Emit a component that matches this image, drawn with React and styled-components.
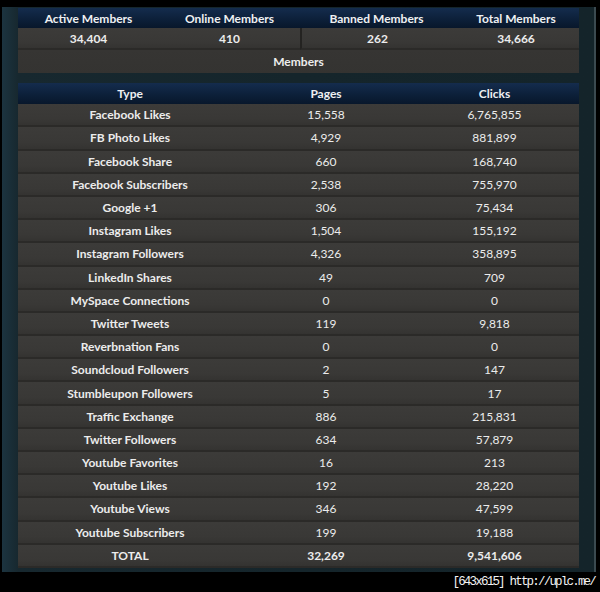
import styled, { createGlobalStyle } from "styled-components";

const Global = createGlobalStyle`
    html, body {
        margin: 0;
        padding: 0;
        background: #000;
    }
    body {
        font-family: Lato, "Open Sans", sans-serif;
    }
`;

const Page = styled.div`
    width: 600px;
    height: 592px;
    background: #000;
    display: flex;
    flex-direction: column;
    padding-top: 7px;
    box-sizing: border-box;
`;

const Panel = styled.div`
    height: 565px;
    margin-left: 2px;
    margin-right: 4px;
    box-sizing: border-box;
    padding: 1px 15px 0 16px;
    background: linear-gradient(to right, #1c3440 0px, #17282f 16px, #15252b 50%, #14242a 100%);
    border-right: 2px solid #3b4a50;
    display: flex;
    flex-direction: column;
    gap: 10px;
`;

const Footer = styled.div`
    display: flex;
    justify-content: flex-end;
    padding: 3px 5px 0 0;
    font-family: "Liberation Mono", monospace;
    font-size: 12.5px;
    letter-spacing: -1.8px;
    color: #f2f2f2;
`;

const Grid = styled.div`
    display: grid;
    grid-template-columns: ${(p) => p.$cols};
`;

const HeadCell = styled.div`
    height: ${(p) => p.$h || 20}px;
    display: flex;
    align-items: center;
    justify-content: center;
    background: linear-gradient(to bottom, #142c4d 0%, #0c1f38 60%, #08172b 100%);
    color: #eef0f2;
    font-weight: 700;
    font-size: 12px;
`;

const Cell = styled.div`
    height: ${(p) => p.$h || 23.2}px;
    box-sizing: border-box;
    display: flex;
    align-items: center;
    justify-content: center;
    background: linear-gradient(to bottom, #3c3b39 0%, #393836 70%, #343331 100%);
    border-bottom: 2px solid #2b2a28;
    border-left: ${(p) => (p.$divider ? "2px solid #242321" : "none")};
    color: #ececec;
    font-size: 12px;
    font-weight: ${(p) => (p.$bold ? 700 : 400)};
`;

const SpanCell = styled(Cell)`
    grid-column: 1 / -1;
    background: linear-gradient(to bottom, #363533 0%, #343331 100%);
    border-bottom: none;
    font-weight: 700;
`;

const members = [
    ["Active Members", "34,404"],
    ["Online Members", "410"],
    ["Banned Members", "262"],
    ["Total Members", "34,666"],
];

const rows = [
    ["Facebook Likes", "15,558", "6,765,855"],
    ["FB Photo Likes", "4,929", "881,899"],
    ["Facebook Share", "660", "168,740"],
    ["Facebook Subscribers", "2,538", "755,970"],
    ["Google +1", "306", "75,434"],
    ["Instagram Likes", "1,504", "155,192"],
    ["Instagram Followers", "4,326", "358,895"],
    ["LinkedIn Shares", "49", "709"],
    ["MySpace Connections", "0", "0"],
    ["Twitter Tweets", "119", "9,818"],
    ["Reverbnation Fans", "0", "0"],
    ["Soundcloud Followers", "2", "147"],
    ["Stumbleupon Followers", "5", "17"],
    ["Traffic Exchange", "886", "215,831"],
    ["Twitter Followers", "634", "57,879"],
    ["Youtube Favorites", "16", "213"],
    ["Youtube Likes", "192", "28,220"],
    ["Youtube Views", "346", "47,599"],
    ["Youtube Subscribers", "199", "19,188"],
];

const App = () => {
    return (
        <Page>
            <Global />
            <Panel>
                <Grid $cols="141px 141px 153px 126px">
                    {members.map(([label]) => (
                        <HeadCell key={label}>{label}</HeadCell>
                    ))}
                    {members.map(([label, value], i) => (
                        <Cell key={label + "v"} $h={22} $bold $divider={i === 2}>
                            {value}
                        </Cell>
                    ))}
                    <SpanCell>Members</SpanCell>
                </Grid>
                <Grid $cols="224px 168px 169px">
                    <HeadCell $h={21}>Type</HeadCell>
                    <HeadCell $h={21}>Pages</HeadCell>
                    <HeadCell $h={21}>Clicks</HeadCell>
                    {rows.map(([type, pages, clicks]) => [
                        <Cell key={type} $bold>{type}</Cell>,
                        <Cell key={type + "p"}>{pages}</Cell>,
                        <Cell key={type + "c"}>{clicks}</Cell>,
                    ])}
                    <Cell $bold>TOTAL</Cell>
                    <Cell $bold>32,269</Cell>
                    <Cell $bold>9,541,606</Cell>
                </Grid>
            </Panel>
            <Footer>[643x615] http://uplc.me/</Footer>
        </Page>
    );
};

export default App;
